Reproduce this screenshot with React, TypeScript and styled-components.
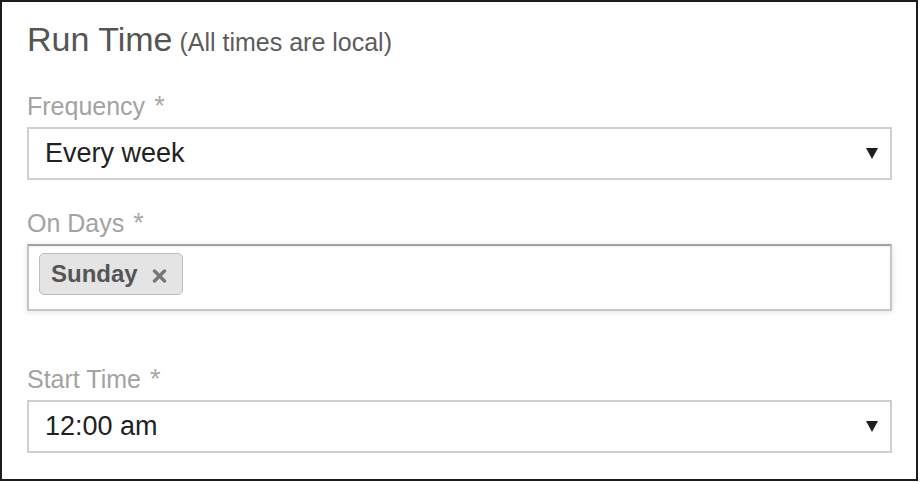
import React from "react";
import styled, { createGlobalStyle } from "styled-components";

const GlobalStyle = createGlobalStyle`
  html, body { margin: 0; padding: 0; background: #fff; }
  body { font-family: "Liberation Sans", Arial, Helvetica, sans-serif; }
`;

const Frame = styled.div`
  box-sizing: border-box;
  width: 918px;
  height: 481px;
  border: 2px solid #1c1c1c;
  padding: 17px 24px 0 25px;
  display: flex;
  flex-direction: column;
  background: #fff;
`;

const Title = styled.h2`
  margin: 0 0 34px;
  font-weight: normal;
  font-size: 34px;
  line-height: 40px;
  color: #555;
  white-space: nowrap;
`;

const TitleNote = styled.span`
  font-size: 25px;
  line-height: 1;
  color: #5c5c5c;
`;

const Field = styled.div<{ $after: number }>`
  display: flex;
  flex-direction: column;
  margin-bottom: ${(p) => p.$after}px;
`;

const Label = styled.label`
  font-size: 25px;
  line-height: 26px;
  color: #a3a3a3;
  margin-bottom: 8px;
  white-space: nowrap;
`;

const Required = styled.span`
  margin-left: 9px;
  font-size: 27px;
  line-height: 0;
  color: #a8a8a8;
`;

const Select = styled.div`
  box-sizing: border-box;
  height: 53px;
  border: 2px solid #cfcfcf;
  display: flex;
  align-items: center;
  justify-content: space-between;
  padding: 0 12px 0 16px;
  font-size: 27px;
  color: #222;
`;

const CaretIcon = styled.svg`
  width: 12px;
  height: 11px;
  flex: none;
`;

const MultiBox = styled.div`
  box-sizing: border-box;
  height: 67px;
  border: 2px solid #c6c6c6;
  border-top-color: #a2a2a2;
  box-shadow: 0 1px 6px rgba(0, 0, 0, 0.12), inset 0 1px 2px rgba(0, 0, 0, 0.08);
  padding: 7px 10px;
  display: flex;
  align-items: flex-start;
  gap: 6px;
`;

const Tag = styled.span`
  box-sizing: border-box;
  height: 42px;
  display: inline-flex;
  align-items: center;
  gap: 14px;
  padding: 0 15px 0 11px;
  background: #e4e4e4;
  border: 1px solid #bdbdbd;
  border-radius: 5px;
  font-weight: bold;
  font-size: 24px;
  color: #555;
`;

const RemoveIcon = styled.svg`
  width: 15px;
  height: 14px;
  flex: none;
  margin-top: 3px;
`;

const Caret = () => (
  <CaretIcon viewBox="0 0 12 11">
    <polygon points="0,0 12,0 6,11" fill="#1f1f1f" />
  </CaretIcon>
);

const Remove = () => (
  <RemoveIcon viewBox="0 0 15 14">
    <path d="M2.5 2 L12.5 12 M12.5 2 L2.5 12" stroke="#777" strokeWidth="3.4" strokeLinecap="round" />
  </RemoveIcon>
);

export default function App() {
  return (
    <>
      <GlobalStyle />
      <Frame>
        <Title>
          Run Time<TitleNote> (All times are local)</TitleNote>
        </Title>
        <Field $after={30}>
          <Label>
            Frequency<Required>*</Required>
          </Label>
          <Select>
            <span>Every week</span>
            <Caret />
          </Select>
        </Field>
        <Field $after={55}>
          <Label>
            On Days<Required>*</Required>
          </Label>
          <MultiBox>
            <Tag>
              <span>Sunday</span>
              <Remove />
            </Tag>
          </MultiBox>
        </Field>
        <Field $after={0}>
          <Label>
            Start Time<Required>*</Required>
          </Label>
          <Select>
            <span>12:00 am</span>
            <Caret />
          </Select>
        </Field>
      </Frame>
    </>
  );
}
